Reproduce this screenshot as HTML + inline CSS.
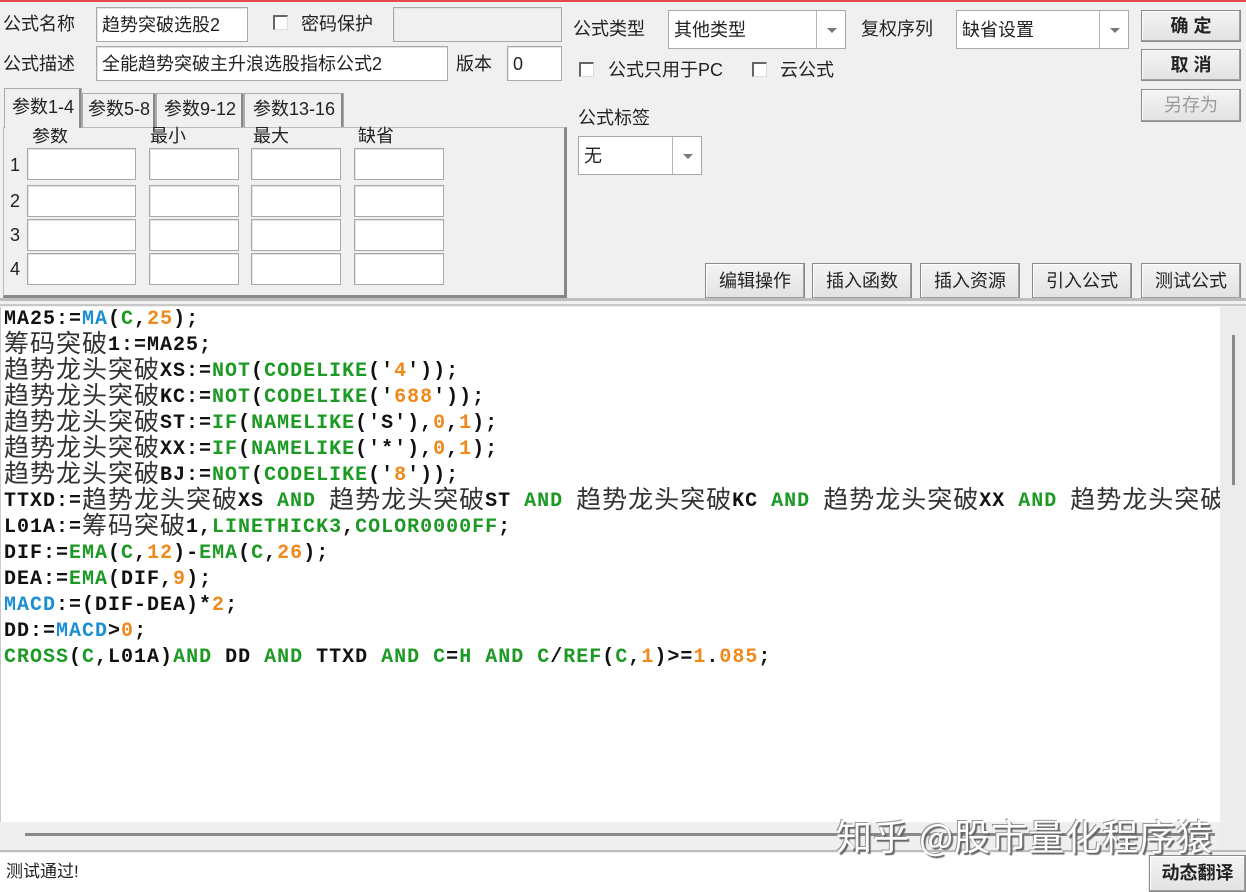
<!DOCTYPE html>
<html><head><meta charset="utf-8">
<style>
*{box-sizing:border-box;margin:0;padding:0}
body{width:1246px;height:892px;background:#f0f0f0;position:relative;overflow:hidden;font-family:"Liberation Sans","Noto Sans CJK SC",sans-serif;font-size:18px;color:#222}
.a{position:absolute;white-space:nowrap}
.inp{position:absolute;background:#fff;border:1px solid #a9a9a9;box-shadow:inset 1px 1px 0 #e3e3e3}
.lbl{position:absolute;white-space:nowrap;font-size:18px;line-height:20px;color:#222}
.cb{position:absolute;width:15px;height:15px;background:#fff;border-top:2px solid #666;border-left:2px solid #666;border-right:1px solid #ddd;border-bottom:1px solid #ddd}
.btn{position:absolute;background:linear-gradient(#f4f4f4,#e2e2e2);border:1px solid #8a8a8a;box-shadow:inset -1px -1px 0 #a0a0a0,inset 1px 1px 0 #fff;text-align:center;font-size:18px;color:#222}
.combo{position:absolute;background:#fff;border:1px solid #a9a9a9}
.combo .dd{position:absolute;right:0;top:0;bottom:0;width:29px;border-left:1px solid #b5b5b5;background:#fff}
.combo .dd:after{content:"";position:absolute;left:10px;top:17px;border-left:5px solid transparent;border-right:5px solid transparent;border-top:5px solid #777}
.tab{position:absolute;top:93px;height:34px;border:1px solid #aaa;border-bottom:none;background:#f0f0f0;font-size:18px;line-height:30px;text-align:center;box-shadow:inset -2px 0 0 #888}
.code{position:absolute;left:3px;white-space:nowrap;font-family:"Liberation Mono",monospace;font-weight:bold;font-size:20px;letter-spacing:1px;line-height:26px;height:26px;color:#111}
.z{font-family:"Noto Sans CJK SC","WenQuanYi Zen Hei",sans-serif;font-weight:normal;font-size:25px;letter-spacing:1px;color:#333;line-height:20px;display:inline-block;vertical-align:top;margin-top:-1px;height:26px}
.b{color:#1c8fd2}.g{color:#1c9a24}.o{color:#f0891c}
</style></head><body>
<div class="a" style="left:0;top:0;width:1246px;height:2px;background:#e5494d"></div>

<div class="lbl" style="left:3px;top:14px">公式名称</div>
<div class="inp" style="left:96px;top:7px;width:152px;height:35px"><span class="lbl" style="left:5px;top:7px">趋势突破选股2</span></div>
<div class="cb" style="left:273px;top:15px"></div>
<div class="lbl" style="left:301px;top:14px">密码保护</div>
<div class="inp" style="left:393px;top:7px;width:169px;height:35px;background:#f0f0f0"></div>

<div class="lbl" style="left:3px;top:54px">公式描述</div>
<div class="inp" style="left:96px;top:46px;width:352px;height:35px"><span class="lbl" style="left:5px;top:7px">全能趋势突破主升浪选股指标公式2</span></div>
<div class="lbl" style="left:456px;top:54px">版本</div>
<div class="inp" style="left:507px;top:46px;width:55px;height:35px"><span class="lbl" style="left:5px;top:7px">0</span></div>

<div class="a" style="left:3px;top:127px;width:564px;height:171px;border:1px solid #bbb;border-right:3px solid #888;border-bottom:3px solid #888;background:#f0f0f0"></div>
<div class="tab" style="left:4px;top:88px;width:78px;height:40px;border-bottom:none;line-height:36px;z-index:2">参数1-4</div>
<div class="tab" style="left:82px;width:74px">参数5-8</div>
<div class="tab" style="left:156px;width:88px">参数9-12</div>
<div class="tab" style="left:244px;width:100px">参数13-16</div>

<div class="lbl" style="left:32px;top:126px">参数</div>
<div class="lbl" style="left:150px;top:126px">最小</div>
<div class="lbl" style="left:253px;top:126px">最大</div>
<div class="lbl" style="left:358px;top:126px">缺省</div>

<div class="lbl" style="left:10px;top:155px">1</div>
<div class="lbl" style="left:10px;top:191px">2</div>
<div class="lbl" style="left:10px;top:225px">3</div>
<div class="lbl" style="left:10px;top:259px">4</div>
<div class="inp" style="left:27px;top:148px;width:109px;height:32px"></div>
<div class="inp" style="left:149px;top:148px;width:90px;height:32px"></div>
<div class="inp" style="left:251px;top:148px;width:90px;height:32px"></div>
<div class="inp" style="left:354px;top:148px;width:90px;height:32px"></div>
<div class="inp" style="left:27px;top:185px;width:109px;height:32px"></div>
<div class="inp" style="left:149px;top:185px;width:90px;height:32px"></div>
<div class="inp" style="left:251px;top:185px;width:90px;height:32px"></div>
<div class="inp" style="left:354px;top:185px;width:90px;height:32px"></div>
<div class="inp" style="left:27px;top:219px;width:109px;height:32px"></div>
<div class="inp" style="left:149px;top:219px;width:90px;height:32px"></div>
<div class="inp" style="left:251px;top:219px;width:90px;height:32px"></div>
<div class="inp" style="left:354px;top:219px;width:90px;height:32px"></div>
<div class="inp" style="left:27px;top:253px;width:109px;height:32px"></div>
<div class="inp" style="left:149px;top:253px;width:90px;height:32px"></div>
<div class="inp" style="left:251px;top:253px;width:90px;height:32px"></div>
<div class="inp" style="left:354px;top:253px;width:90px;height:32px"></div>

<div class="lbl" style="left:573px;top:19px">公式类型</div>
<div class="combo" style="left:668px;top:10px;width:178px;height:39px"><span class="lbl" style="left:5px;top:9px">其他类型</span><div class="dd"></div></div>
<div class="lbl" style="left:861px;top:19px">复权序列</div>
<div class="combo" style="left:956px;top:10px;width:173px;height:39px"><span class="lbl" style="left:5px;top:9px">缺省设置</span><div class="dd"></div></div>
<div class="cb" style="left:579px;top:62px"></div>
<div class="lbl" style="left:608px;top:60px">公式只用于PC</div>
<div class="cb" style="left:752px;top:62px"></div>
<div class="lbl" style="left:780px;top:60px">云公式</div>
<div class="lbl" style="left:578px;top:108px">公式标签</div>
<div class="combo" style="left:578px;top:136px;width:124px;height:39px"><span class="lbl" style="left:5px;top:9px">无</span><div class="dd"></div></div>

<div class="btn" style="left:1141px;top:10px;width:100px;height:32px;line-height:30px;font-weight:bold">确 定</div>
<div class="btn" style="left:1141px;top:49px;width:100px;height:32px;line-height:30px;font-weight:bold">取 消</div>
<div class="btn" style="left:1141px;top:89px;width:100px;height:33px;line-height:31px;color:#9a9a9a">另存为</div>

<div class="btn" style="left:705px;top:263px;width:100px;height:36px;line-height:34px">编辑操作</div>
<div class="btn" style="left:812px;top:263px;width:100px;height:36px;line-height:34px">插入函数</div>
<div class="btn" style="left:920px;top:263px;width:100px;height:36px;line-height:34px">插入资源</div>
<div class="btn" style="left:1032px;top:263px;width:100px;height:36px;line-height:34px">引入公式</div>
<div class="btn" style="left:1141px;top:263px;width:100px;height:36px;line-height:34px">测试公式</div>

<div class="a" style="left:0;top:298px;width:1246px;height:3px;background:#bdbdbd"></div>
<div class="a" style="left:0;top:304px;width:1246px;height:2px;background:#c8c8c8"></div>

<div class="a" style="left:0;top:307px;width:1220px;height:515px;background:#fff;overflow:hidden;border-left:1px solid #ccc">
<div class="code" style="top:0px">MA25:=<span class="b">MA</span>(<span class="g">C</span>,<span class="o">25</span>);</div>
<div class="code" style="top:26px"><span class="z">筹码突破</span>1:=MA25;</div>
<div class="code" style="top:52px"><span class="z">趋势龙头突破</span>XS:=<span class="g">NOT</span>(<span class="g">CODELIKE</span>('<span class="o">4</span>'));</div>
<div class="code" style="top:78px"><span class="z">趋势龙头突破</span>KC:=<span class="g">NOT</span>(<span class="g">CODELIKE</span>('<span class="o">688</span>'));</div>
<div class="code" style="top:104px"><span class="z">趋势龙头突破</span>ST:=<span class="g">IF</span>(<span class="g">NAMELIKE</span>('S'),<span class="o">0</span>,<span class="o">1</span>);</div>
<div class="code" style="top:130px"><span class="z">趋势龙头突破</span>XX:=<span class="g">IF</span>(<span class="g">NAMELIKE</span>('*'),<span class="o">0</span>,<span class="o">1</span>);</div>
<div class="code" style="top:156px"><span class="z">趋势龙头突破</span>BJ:=<span class="g">NOT</span>(<span class="g">CODELIKE</span>('<span class="o">8</span>'));</div>
<div class="code" style="top:182px">TTXD:=<span class="z">趋势龙头突破</span>XS <span class="g">AND</span> <span class="z">趋势龙头突破</span>ST <span class="g">AND</span> <span class="z">趋势龙头突破</span>KC <span class="g">AND</span> <span class="z">趋势龙头突破</span>XX <span class="g">AND</span> <span class="z">趋势龙头突破</span>BJ;</div>
<div class="code" style="top:208px">L01A:=<span class="z">筹码突破</span>1,<span class="g">LINETHICK3</span>,<span class="g">COLOR0000FF</span>;</div>
<div class="code" style="top:234px">DIF:=<span class="g">EMA</span>(<span class="g">C</span>,<span class="o">12</span>)-<span class="g">EMA</span>(<span class="g">C</span>,<span class="o">26</span>);</div>
<div class="code" style="top:260px">DEA:=<span class="g">EMA</span>(DIF,<span class="o">9</span>);</div>
<div class="code" style="top:286px"><span class="b">MACD</span>:=(DIF-DEA)*<span class="o">2</span>;</div>
<div class="code" style="top:312px">DD:=<span class="b">MACD</span>&gt;<span class="o">0</span>;</div>
<div class="code" style="top:338px"><span class="g">CROSS</span>(<span class="g">C</span>,L01A)<span class="g">AND</span> DD <span class="g">AND</span> TTXD <span class="g">AND</span> <span class="g">C</span>=<span class="g">H</span> <span class="g">AND</span> <span class="g">C</span>/<span class="g">REF</span>(<span class="g">C</span>,<span class="o">1</span>)&gt;=<span class="o">1</span>.<span class="o">085</span>;</div>
</div>

<div class="a" style="left:1220px;top:307px;width:26px;height:546px;background:#ececec"></div>
<div class="a" style="left:1232px;top:335px;width:3px;height:150px;background:#8a8a8a"></div>
<div class="a" style="left:0;top:822px;width:1220px;height:30px;background:#efefef"></div>
<div class="a" style="left:25px;top:833px;width:1190px;height:3px;background:#888"></div>
<div class="a" style="left:0;top:850px;width:1246px;height:2px;background:#bbb"></div>
<div class="a" style="left:0;top:853px;width:1148px;height:39px;background:#fff"></div>
<div class="lbl" style="left:6px;top:862px;font-size:17px">测试通过!</div>
<div class="btn" style="left:1149px;top:855px;width:97px;height:37px;line-height:34px;font-weight:bold">动态翻译</div>

<div class="a" style="left:836px;top:812px;font-size:36px;line-height:46px;color:#fff;font-family:'Noto Sans CJK SC',sans-serif;text-shadow:2px 2px 1px #666,-1px -1px 0 #999;letter-spacing:1px">知乎 @股市量化程序猿</div>
</body></html>
